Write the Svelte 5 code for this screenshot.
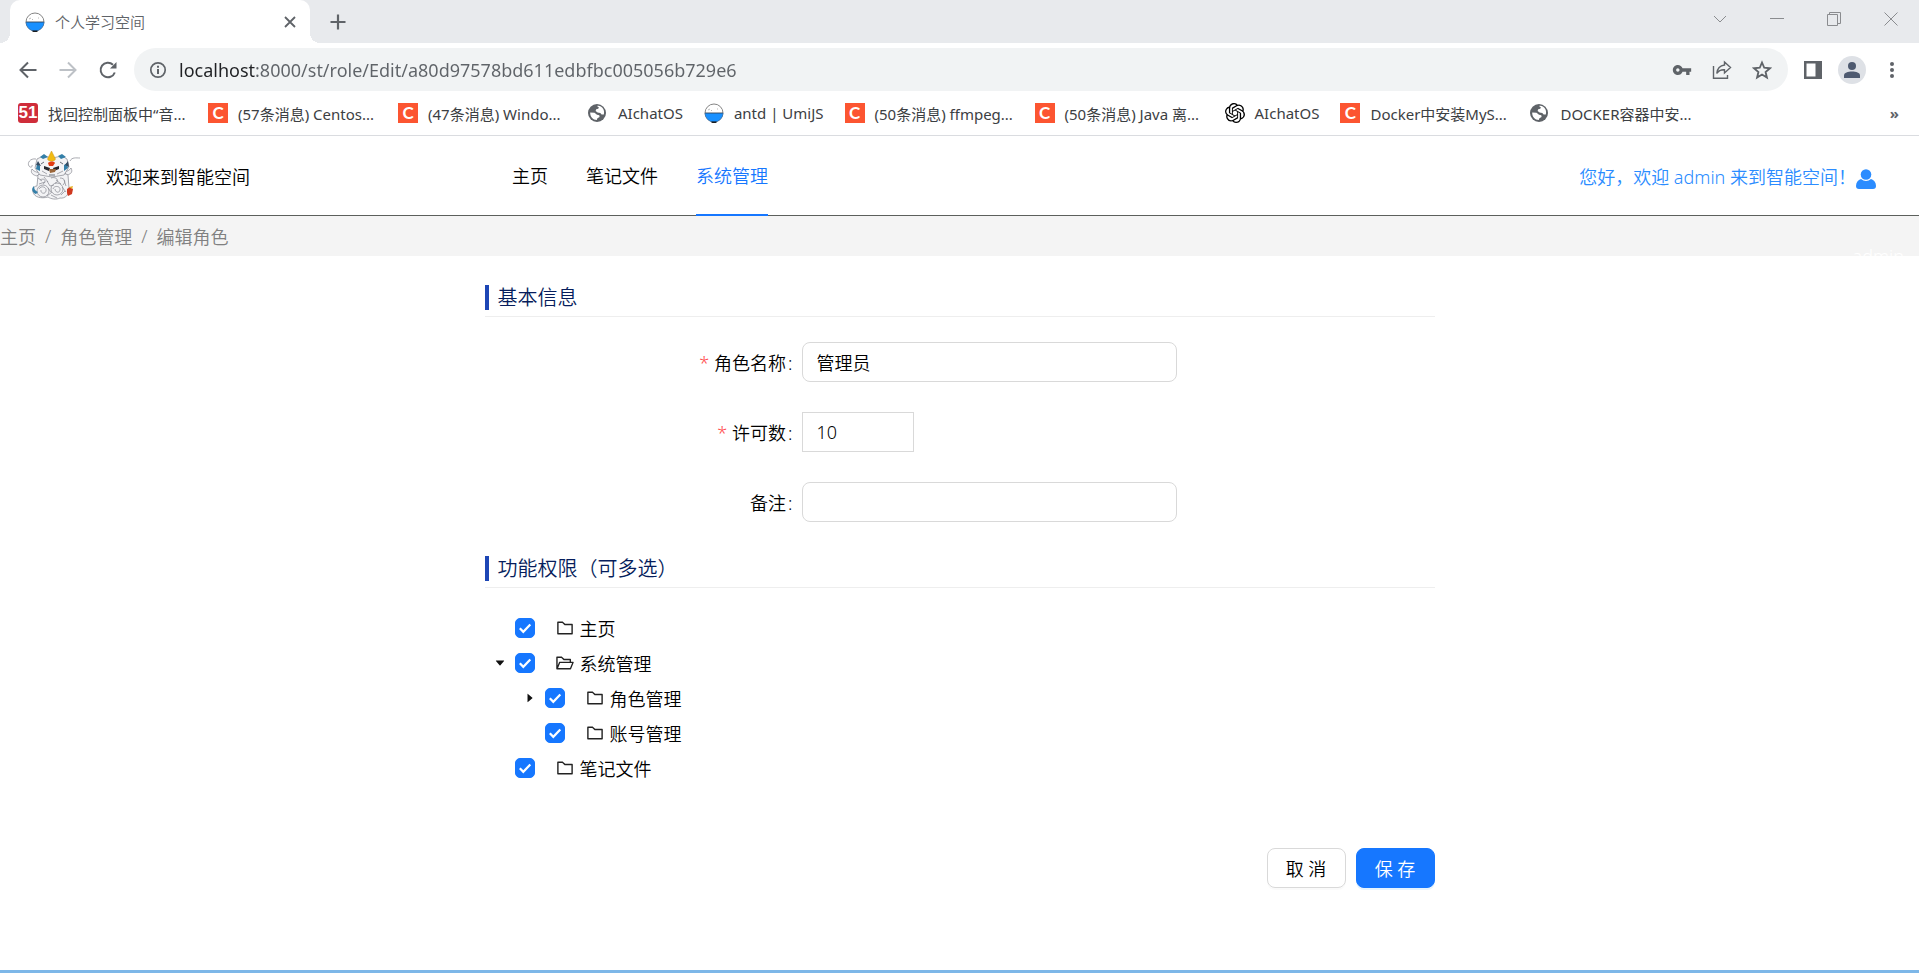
<script>
  let url = $state("localhost:8000/st/role/Edit/a80d97578bd611edbfbc005056b729e6");
  let form = $state({ name: "管理员", license: "10", remark: "" });

  const bookmarks = [
    { icon: "51", text: "找回控制面板中“音...", long: true },
    { icon: "csdn", text: "(57条消息) Centos...", long: true },
    { icon: "csdn", text: "(47条消息) Windo...", long: true },
    { icon: "globe", text: "AIchatOS" },
    { icon: "umi", text: "antd | UmiJS" },
    { icon: "csdn", text: "(50条消息) ffmpeg...", long: true },
    { icon: "csdn", text: "(50条消息) Java 离...", long: true },
    { icon: "openai", text: "AIchatOS" },
    { icon: "csdn", text: "Docker中安装MyS...", long: true },
    { icon: "globe", text: "DOCKER容器中安...", long: true },
  ];

  const menus = [
    { text: "主页" },
    { text: "笔记文件" },
    { text: "系统管理", active: true },
  ];

  const crumbs = ["主页", "角色管理", "编辑角色"];

  let tree = $state([
    { key: "home", title: "主页", checked: true },
    {
      key: "system",
      title: "系统管理",
      checked: true,
      open: true,
      children: [
        { key: "role", title: "角色管理", checked: true, open: false, children: [] },
        { key: "account", title: "账号管理", checked: true },
      ],
    },
    { key: "note", title: "笔记文件", checked: true },
  ]);
</script>

{#snippet umi()}
  <svg width="20" height="20" viewBox="0 0 20 20" aria-hidden="true">
    <circle cx="10" cy="10" r="9" fill="#fff" stroke="#777" stroke-width="0.9" />
    <path d="M1 10h18a9 9 0 0 1-18 0z" fill="#1890ff" />
    <path d="M1 10h18" stroke="#345" stroke-width="0.9" />
    <path d="M1 10a9 9 0 0 0 18 0" fill="none" stroke="#2a6db0" stroke-width="0.6" />
    <path d="M7.500 19.200h5" stroke="#000" stroke-width="1.300" />
    <path d="M4 7l2-1M7 7l1 1M13 6h1" stroke="#bbb" />
  </svg>
{/snippet}

{#snippet bookmarkIcon(icon)}
  {#if icon === "51"}
    <span class="fav fav-51">51</span>
  {:else if icon === "csdn"}
    <span class="fav fav-csdn">C</span>
  {:else if icon === "umi"}
    {@render umi()}
  {:else if icon === "globe"}
    <svg width="20" height="20" viewBox="0 0 20 20" aria-hidden="true">
      <circle cx="9" cy="10" r="9" fill="#5f6368" />
      <path
        d="M9 3c2-.9 5 .3 6.400 3.200.7 1.700.9 3.300.4 5.200l-2.200.1-1.300-1.500-2.700-.4-2-1.700.6-1.700 2-.5.700-1.300zM2.200 9.500l4.300.2 2.500 2 2.300.6.3 1.700-2.200 1.200-.6 1.800c-3.800 0-6.800-3.300-6.600-7.500z"
        fill="#fff"
      />
    </svg>
  {:else}
    <svg width="20" height="20" viewBox="0 0 24 24" fill="#000" aria-hidden="true">
      <path
        d="M22.2819 9.8211a5.9847 5.9847 0 0 0-.5157-4.9108 6.0462 6.0462 0 0 0-6.5098-2.9A6.0651 6.0651 0 0 0 4.9807 4.1818a5.9847 5.9847 0 0 0-3.9977 2.9 6.0462 6.0462 0 0 0 .7427 7.0966 5.98 5.98 0 0 0 .511 4.9107 6.051 6.051 0 0 0 6.5146 2.9001A5.9847 5.9847 0 0 0 13.2599 24a6.0557 6.0557 0 0 0 5.7718-4.2058 5.9894 5.9894 0 0 0 3.9977-2.9001 6.0557 6.0557 0 0 0-.7475-7.0729zm-9.022 12.6081a4.4755 4.4755 0 0 1-2.8764-1.0408l.1419-.0804 4.7783-2.7582a.7948.7948 0 0 0 .3927-.6813v-6.7369l2.02 1.1686a.071.071 0 0 1 .038.0615v5.5826a4.504 4.504 0 0 1-4.4945 4.4849zm-9.6607-4.1254a4.4708 4.4708 0 0 1-.5346-3.0137l.142.0852 4.783 2.7582a.7712.7712 0 0 0 .7806 0l5.8428-3.3685v2.3324a.0804.0804 0 0 1-.0332.0615L9.74 19.9502a4.4992 4.4992 0 0 1-6.1408-1.6464zM2.3408 7.8956a4.485 4.485 0 0 1 2.3655-1.9728V11.6a.7664.7664 0 0 0 .3879.6765l5.8144 3.3543-2.0201 1.1685a.0757.0757 0 0 1-.071 0l-4.8303-2.7865A4.504 4.504 0 0 1 2.3408 7.872zm16.5963 3.8558L13.1038 8.364 15.1192 7.2a.0757.0757 0 0 1 .071 0l4.8303 2.7913a4.4944 4.4944 0 0 1-.6765 8.1042v-5.6772a.79.79 0 0 0-.407-.667zm2.0107-3.0231l-.142-.0852-4.7735-2.7818a.7759.7759 0 0 0-.7854 0L9.409 9.2297V6.8974a.0662.0662 0 0 1 .0284-.0615l4.8303-2.7866a4.4992 4.4992 0 0 1 6.6802 4.66zM8.3065 12.863l-2.02-1.1638a.0804.0804 0 0 1-.038-.0567V6.0742a4.4992 4.4992 0 0 1 7.3757-3.4537l-.142.0805L8.704 5.459a.7948.7948 0 0 0-.3927.6813zm1.0976-2.3654l2.602-1.4998 2.6069 1.4998v2.9994l-2.5974 1.4997-2.6067-1.4997Z"
      />
    </svg>
  {/if}
{/snippet}

{#snippet treeNodes(nodes)}
  <ul class="tree">
    {#each nodes as node (node.key)}
      <li>
        <div class="node">
          {#if node.children}
            <button
              type="button"
              class="switcher"
              class:closed={!node.open}
              aria-label={node.title}
              onclick={() => (node.open = !node.open)}
            >
              <svg width="12" height="12" viewBox="0 0 1024 1024" fill="#111" aria-hidden="true">
                <path
                  d="M840.4 300H183.6c-19.7 0-30.7 20.8-18.5 35l328.4 380.8c9.4 10.9 27.5 10.9 37 0L858.9 335c12.2-14.2 1.2-35-18.5-35z"
                />
              </svg>
            </button>
          {:else}
            <span class="switcher"></span>
          {/if}
          <span class="check">
            <input type="checkbox" id={node.key} bind:checked={node.checked} />
            <svg width="20" height="20" viewBox="0 0 20 20" aria-hidden="true">
              <path d="M4.800 10.200l3.500 3.600 7-7.300" fill="none" stroke="#fff" stroke-width="2.200" />
            </svg>
          </span>
          <label for={node.key}>
            <svg width="20" height="20" viewBox="0 0 1024 1024" fill="#222" aria-hidden="true">
              {#if node.open}
                <path
                  d="M928 444H820V330.4c0-17.7-14.3-32-32-32H473L355.7 186.2a8.15 8.15 0 00-5.5-2.2H96c-17.7 0-32 14.3-32 32v592c0 17.7 14.3 32 32 32h698c13 0 24.8-7.9 29.7-20l134-332c1.5-3.8 2.3-7.9 2.3-12 0-17.7-14.3-32-32-32zM136 256h188.5l119.6 114.4H748V444H238c-13 0-24.8 7.9-29.7 20L136 643.2V256zm635.3 512H159l103.3-256h612.4L771.3 768z"
                />
              {:else}
                <path
                  d="M880 298.4H521L403.7 186.2a8.15 8.15 0 00-5.5-2.2H144c-17.7 0-32 14.3-32 32v592c0 17.7 14.3 32 32 32h736c17.7 0 32-14.3 32-32V330.4c0-17.7-14.3-32-32-32zM840 768H184V256h188.5l119.6 114.4H840V768z"
                />
              {/if}
            </svg>
            {node.title}
          </label>
        </div>
        {#if node.open}
          {@render treeNodes(node.children)}
        {/if}
      </li>
    {/each}
  </ul>
{/snippet}

<div class="window">
  <div class="tabstrip">
    <div class="tab">
      {@render umi()}
      <span class="tab-title">个人学习空间</span>
      <button type="button" aria-label="关闭标签页">
        <svg width="12" height="12" viewBox="0 0 12 12" stroke="#5f6368" stroke-width="1.800">
          <path d="M1 1l10 10M11 1L1 11" />
        </svg>
      </button>
    </div>
    <button type="button" class="new-tab" aria-label="新标签页">
      <svg width="16" height="16" viewBox="0 0 16 16" stroke="#5f6368" stroke-width="2.200">
        <path d="M8 0.500v15M0.500 8h15" />
      </svg>
    </button>
    <div class="controls">
      <button type="button" aria-label="搜索标签页">
        <svg width="14" height="14" viewBox="0 0 14 14"><path d="M1 4l6 6 6-6" /></svg>
      </button>
      <button type="button" aria-label="最小化">
        <svg width="14" height="14" viewBox="0 0 14 14"><path d="M0 6.500h14" /></svg>
      </button>
      <button type="button" aria-label="还原">
        <svg width="14" height="14" viewBox="0 0 14 14">
          <path d="M0.500 2.500h10v11h-10zM2.500 2.500V0.500h11v11H10.500" />
        </svg>
      </button>
      <button type="button" aria-label="关闭">
        <svg width="14" height="14" viewBox="0 0 14 14"><path d="M0.500 0.500l13 13M13.500 0.500l-13 13" /></svg>
      </button>
    </div>
  </div>

  <div class="toolbar">
    <div class="history">
      <button type="button" aria-label="后退">
        <svg width="20" height="20" viewBox="0 0 20 20" stroke="#5f6368">
          <path d="M18.500 10H3M10 2.500L2.500 10l7.500 7.500" />
        </svg>
      </button>
      <button type="button" aria-label="前进">
        <svg width="20" height="20" viewBox="0 0 20 20" stroke="#bdc1c6">
          <path d="M1.500 10H17M10 2.500l7.500 7.500-7.500 7.500" />
        </svg>
      </button>
      <button type="button" aria-label="刷新">
        <svg width="20" height="20" viewBox="0 0 20 20" stroke="#5f6368">
          <path d="M16.800 12.500A7.300 7.300 0 1 1 15 4.700" />
          <path d="M18.500 2v6.500H12z" fill="#5f6368" stroke="none" />
        </svg>
      </button>
    </div>
    <div class="omnibox">
      <svg width="18" height="18" viewBox="0 0 18 18" aria-hidden="true">
        <circle cx="9" cy="9" r="7.200" fill="none" stroke="#5f6368" stroke-width="1.700" />
        <path d="M9 8v5M9 4.800v1.900" stroke="#5f6368" stroke-width="2" />
      </svg>
      <input type="text" class="url" aria-label="地址栏" bind:value={url} />
      <button type="button" aria-label="密码">
        <svg width="20" height="20" viewBox="0 0 24 24" fill="#5f6368" stroke="none">
          <path
            d="M12.650 10C11.830 7.670 9.610 6 7 6c-3.310 0-6 2.690-6 6s2.690 6 6 6c2.610 0 4.830-1.670 5.650-4H17v4h4v-4h2v-4H12.650zM7 14c-1.100 0-2-.9-2-2s.9-2 2-2 2 .9 2 2-.9 2-2 2z"
          />
        </svg>
      </button>
      <button type="button" aria-label="分享">
        <svg width="20" height="20" viewBox="0 0 20 20" fill="none" stroke="#5f6368" stroke-width="1.400">
          <path d="M1.500 6v12.300h14V15" />
          <path d="M12.500 2l6 5.500-6 5.500V9.800C9 9.600 6.500 10.800 4.800 13.500 5.300 8.800 8 5.500 12.500 5z" />
        </svg>
      </button>
      <button type="button" aria-label="收藏">
        <svg width="20" height="20" viewBox="0 0 24 24" fill="none" stroke="#5f6368" stroke-width="2.200">
          <path d="M12 3l2.700 6.300 6.800.6-5.200 4.500 1.600 6.700L12 17.500l-5.900 3.600 1.600-6.700L2.500 9.900l6.800-.6z" />
        </svg>
      </button>
    </div>
    <button type="button" aria-label="侧边栏">
      <svg width="18" height="18" viewBox="0 0 18 18">
        <path d="M0 0h18v18H0zM2.500 2.500v13h9v-13z" fill="#5f6368" fill-rule="evenodd" stroke="none" />
      </svg>
    </button>
    <button type="button" class="avatar" aria-label="用户">
      <svg width="16" height="16" viewBox="0 0 16 16" fill="#4e5a70" stroke="none">
        <circle cx="8" cy="4" r="4" />
        <path d="M0 16v-2.500C0 10.500 4 9.500 8 9.500s8 1 8 4V16z" />
      </svg>
    </button>
    <button type="button" aria-label="菜单">
      <svg width="20" height="20" viewBox="0 0 20 20" fill="#5f6368" stroke="none">
        <circle cx="10" cy="4" r="2" />
        <circle cx="10" cy="10" r="2" />
        <circle cx="10" cy="16" r="2" />
      </svg>
    </button>
  </div>

  <nav class="bookmarks">
    {#each bookmarks as item}
      <a href="#top" class:long={item.long}>
        {@render bookmarkIcon(item.icon)}
        <span>{item.text}</span>
      </a>
    {/each}
    <button type="button" class="more">»</button>
  </nav>

  <header class="app-header">
    <svg class="logo" width="54" height="50" viewBox="0 0 54 50" aria-hidden="true">
      <g fill="#f3f3f5" stroke="#85878f" stroke-width="0.700">
        <path d="M9 8C3 7 0 12 2 15c1 2 4 1 3-1M43 10c2-4 6-3 10-3" fill="none" />
        <path d="M10 25c-4-1-7-3-5-7 2 3 5 3 8 4zM40 24c4-1 6-3 4-7-2 3-4 3-7 4z" />
        <path d="M11 24c2-3 27-3 30 0l1 13c1 6-4 11-9 10-4 2-9 1-12-1-7 2-14 0-15-5-1-3 1-6 4-6z" />
        <path d="M10 8l6-3 9 2 10-2 5 3 2 8-5 8-12 2-12-2-5-7z" />
        <circle cx="16" cy="40" r="6" />
        <circle cx="30" cy="38" r="6" />
        <path
          d="M13 29c5-3 7 2 3 4M24 27c6-2 9 4 4 5M33 27c5 0 6 4 3 7M12 38c2-4 8-2 7 2s-6 2-5-1M26 38c1-4 8-3 7 1s-5 2-5-1M20 30l3 5 4-1M35 36l4 5M20 45l5-4M11 27l4 3M12 33l6-2M17 26l4 5M21 37l3 4M29 29l5 4M37 29l2 6M34 44l4-4M24 44l6 3M15 20l5 3M30 23l6-3"
          fill="none"
        />
      </g>
      <g fill="#347fa8">
        <path d="M13 6l4-3 4 3-5 2zM31 5l4-2 4 3-5 2zM10 13l3 2v5l-4-2zM40 12l-3 2v6l4-3z" />
        <path d="M7 35c-3 2-2 7 2 8l2-2c-3-1-4-3-4-6z" />
      </g>
      <path d="M11 10l-2 4 5 1zM41 10l-3 4 4 2z" fill="#344b61" />
      <path d="M24.500 0l4 8c-1 3-7 3-8 0z" fill="#f1bb13" stroke="#cb941d" stroke-width="0.500" />
      <path d="M21 12c2-2 6-2 7 0l-2 3h-4z" fill="#e23b12" />
      <path d="M17 15l6 2-1 3-5-2zM32 15l-6 2 1 3 5-2z" fill="#25262c" />
      <path d="M22 18h7l-1 3-5 1z" fill="#9c673b" />
      <path d="M40 38l3-2 3 2-1 5-4 2-1-3z" fill="#cf3920" />
      <path d="M42 36l4-1-1 3z" fill="#e6b126" />
      <path d="M17 11l-3 2M33 11l3 2M22 24h6" stroke="#686e78" />
    </svg>
    <span class="brand">欢迎来到智能空间</span>
    <nav class="menu">
      {#each menus as item}
        <a href="#top" class:active={item.active}>{item.text}</a>
      {/each}
    </nav>
    <div class="user">
      <span>您好，欢迎 admin 来到智能空间！</span>
      <svg width="20" height="20" viewBox="0 0 20 20" fill="#2b8cff" aria-hidden="true">
        <circle cx="10" cy="5.500" r="5.300" />
        <path d="M5 10c3 2.600 7 2.600 10 0 3 1 5 3.500 5 7 0 2-1 3-3 3H3c-2 0-3-1-3-3 0-3.500 2-6 5-7z" />
      </svg>
    </div>
  </header>

  <nav class="breadcrumb">
    {#each crumbs as crumb, i}
      {#if i > 0}<span>/</span>{/if}
      <span>{crumb}</span>
    {/each}
    <span class="account">admin</span>
  </nav>

  <main>
    <form onsubmit={(e) => e.preventDefault()}>
      <h2><span>基本信息</span></h2>
      <div class="fields">
        <label class="required" for="name">角色名称</label>
        <input type="text" id="name" bind:value={form.name} />
        <label class="required" for="license">许可数</label>
        <input type="text" id="license" class="number" bind:value={form.license} />
        <label for="remark">备注</label>
        <input type="text" id="remark" bind:value={form.remark} />
      </div>

      <h2><span>功能权限（可多选）</span></h2>
      {@render treeNodes(tree)}

      <div class="actions">
        <button type="button">取 消</button>
        <button type="submit" class="primary">保 存</button>
      </div>
    </form>
  </main>
</div>

<style>
  :global(body) {
    background: #fff;
  }

  .window {
    min-height: 100vh;
    box-sizing: border-box;
    display: flex;
    flex-direction: column;
    border-bottom: 3px solid #7db7e8;
    font-family: "Noto Sans", "Noto Sans CJK SC", sans-serif;
    font-size: 18px;
    font-weight: 350;
    color: #000;
  }

  button {
    display: flex;
    align-items: center;
    justify-content: center;
    padding: 0;
    border: none;
    background: none;
    font: inherit;
    color: inherit;
    cursor: pointer;
  }

  input {
    font: inherit;
    color: inherit;
  }

  a {
    color: inherit;
    text-decoration: none;
  }

  svg {
    flex: none;
  }

  /* browser frame */
  .tabstrip {
    display: flex;
    height: 43px;
    padding-left: 10px;
    background: #e8eaed;
  }

  .tab {
    position: relative;
    display: flex;
    align-items: center;
    gap: 10px;
    width: 300px;
    box-sizing: border-box;
    padding: 0 14px 0 15px;
    border-radius: 10px 10px 0 0;
    background: #fff;
    font-size: 15px;
    color: #5f6368;
  }

  .tab::before,
  .tab::after {
    content: "";
    position: absolute;
    bottom: 0;
    width: 10px;
    height: 10px;
  }

  .tab::before {
    left: -10px;
    background: radial-gradient(circle at 0 0, #e8eaed 10px, #fff 10px);
  }

  .tab::after {
    right: -10px;
    background: radial-gradient(circle at 100% 0, #e8eaed 10px, #fff 10px);
  }

  .tab-title {
    flex: 1;
  }

  .new-tab {
    width: 56px;
  }

  .controls {
    display: flex;
    margin-left: auto;
    height: 38px;
  }

  .controls button {
    width: 57px;
  }

  .controls svg {
    fill: none;
    stroke: #8a8c8f;
  }

  .toolbar {
    display: flex;
    align-items: center;
    gap: 16px;
    padding: 5px 17px 0 18px;
    fill: none;
    stroke-width: 2;
  }

  .history {
    display: flex;
    gap: 20px;
  }

  .omnibox {
    flex: 1;
    display: flex;
    align-items: center;
    gap: 20px;
    height: 43px;
    padding: 0 16px 0 15px;
    border-radius: 22px;
    background: #f1f3f4;
  }

  .url {
    flex: 1;
    min-width: 0;
    margin-left: -10px;
    padding: 0 2px;
    border: none;
    outline: none;
    background: linear-gradient(to right, #202124 79px, #5f6368 79px);
    background-clip: text;
    color: transparent;
    font-size: 18px;
    font-weight: 400;
  }

  .avatar {
    width: 28px;
    height: 28px;
    border-radius: 50%;
    background: #dee1e6;
  }

  .bookmarks {
    display: flex;
    align-items: center;
    gap: 21px;
    height: 44px;
    padding: 0 20px 0 18px;
    border-bottom: 1px solid #dadce0;
    font-size: 15px;
    font-weight: 400;
    color: #3c4043;
    white-space: nowrap;
  }

  .bookmarks a {
    display: flex;
    align-items: center;
    gap: 10px;
  }

  .bookmarks .long {
    width: 169px;
  }

  .more {
    margin-left: auto;
    font-weight: 700;
    color: #5f6368;
  }

  .fav {
    flex: none;
    width: 20px;
    height: 20px;
    line-height: 20px;
    text-align: center;
    color: #fff;
    font-size: 17px;
    font-weight: 700;
  }

  .fav-51 {
    border-radius: 3px;
    background: #cf2d3a;
    font-family: "Liberation Sans", sans-serif;
  }

  .fav-csdn {
    background: #fc5531;
    font-family: Lato, sans-serif;
  }

  /* application */
  .app-header {
    display: flex;
    align-items: center;
    height: 79px;
    padding: 0 43px 0 27px;
    border-bottom: 1px solid #5c605c;
  }

  .brand {
    width: 406px;
    margin-left: 25px;
  }

  .menu {
    display: flex;
    align-self: stretch;
    gap: 38px;
  }

  .menu a {
    display: flex;
    align-items: center;
    margin-bottom: -1px;
    border-bottom: 2px solid transparent;
  }

  .menu .active {
    color: #1677ff;
    border-color: #1677ff;
  }

  .user {
    display: flex;
    align-items: flex-end;
    margin-left: auto;
    color: #2b8cff;
  }

  .breadcrumb {
    position: relative;
    display: flex;
    align-items: center;
    gap: 9px;
    height: 40px;
    background: #f4f4f4;
    color: #808080;
  }

  /* sits half over the white page below the bar */
  .account {
    position: absolute;
    top: 30px;
    right: 15px;
    line-height: 20px;
    color: #fff;
  }

  main {
    width: 950px;
    max-width: 100%;
    margin: 0 auto;
    padding: 29px 0 40px;
  }

  h2 {
    margin: 0;
    padding-bottom: 6px;
    border-bottom: 1px solid #eee;
    font-size: 20px;
    font-weight: 350;
    line-height: 25px;
    color: #061d5c;
  }

  h2 span {
    display: block;
    padding-left: 9px;
    border-left: 4px solid #1d46b5;
  }

  .fields {
    display: grid;
    grid-template-columns: 308px 375px;
    align-items: center;
    gap: 30px 9px;
    padding: 25px 0 34px;
  }

  .fields label {
    text-align: right;
  }

  .fields label::after {
    content: ":";
    margin-left: 2px;
  }

  .required::before {
    content: "*";
    margin-right: 5px;
    color: #ff4d4f;
  }

  .fields input {
    height: 40px;
    box-sizing: border-box;
    padding: 0 14px;
    border: 1px solid #d9d9d9;
    border-radius: 8px;
    background: #fff;
    outline: none;
  }

  .fields .number {
    width: 112px;
    border-radius: 0;
  }

  .tree {
    margin: 0;
    padding: 0;
    list-style: none;
  }

  h2 + .tree {
    padding-top: 25px;
  }

  .tree .tree {
    padding-left: 30px;
  }

  .node {
    display: flex;
    align-items: center;
    height: 30px;
    margin-bottom: 5px;
  }

  .switcher {
    width: 30px;
  }

  .closed svg {
    transform: rotate(-90deg);
  }

  .check {
    position: relative;
    width: 20px;
    height: 20px;
    margin-right: 20px;
  }

  .check input {
    appearance: none;
    width: 20px;
    height: 20px;
    margin: 0;
    border: 1px solid #d9d9d9;
    border-radius: 5px;
    display: block;
  }

  .check input:checked {
    border-color: #1677ff;
    background: #1677ff;
  }

  .check svg {
    position: absolute;
    inset: 0;
    pointer-events: none;
  }

  .node label {
    display: flex;
    align-items: center;
    gap: 5px;
  }

  .actions {
    display: flex;
    justify-content: flex-end;
    gap: 10px;
    padding-top: 60px;
  }

  .actions button {
    width: 79px;
    height: 40px;
    border: 1px solid #d9d9d9;
    border-radius: 8px;
    box-shadow: 0 2px 0 rgba(0, 0, 0, 0.02);
  }

  .actions .primary {
    border-color: #1677ff;
    background: #1677ff;
    box-shadow: 0 2px 0 rgba(5, 145, 255, 0.1);
    color: #fff;
  }
</style>
